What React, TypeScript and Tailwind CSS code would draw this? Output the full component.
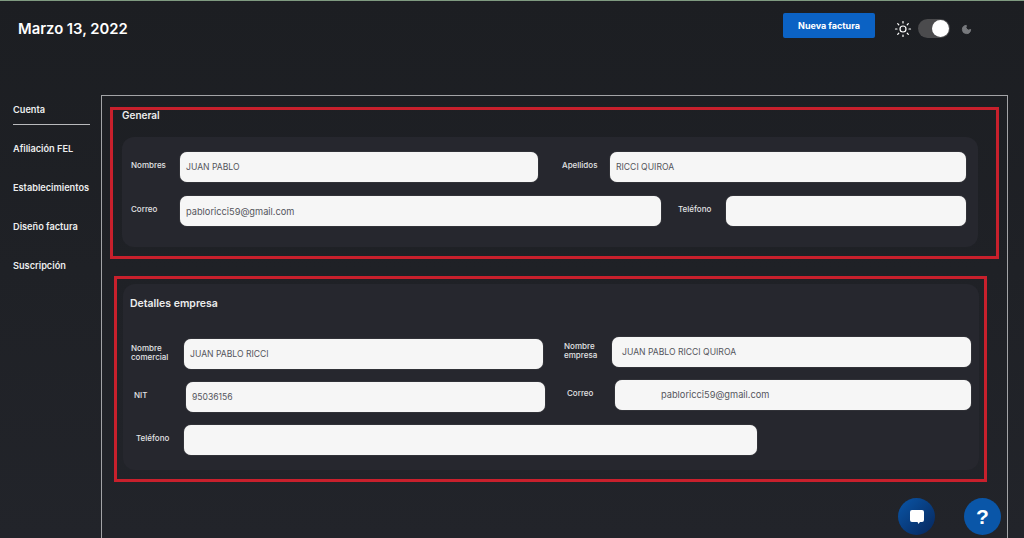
import { Moon, Sun } from 'lucide-react';

const heading = "font-['Inter','Liberation_Sans',sans-serif]";
const body = "font-['Inter','Liberation_Sans',sans-serif]";

const navItems = ['Cuenta', 'Afiliación FEL', 'Establecimientos', 'Diseño factura', 'Suscripción'];

type FieldProps = {
  label: string;
  value?: string;
  labelClass: string;
  inputClass: string;
  textClass?: string;
};

const Field = ({ label, value, labelClass, inputClass, textClass = 'pl-[6px] text-[8.6px]' }: FieldProps) => (
  <div className="flex items-center">
    <span className={`${body} shrink-0 text-[8px] font-medium leading-[9px] text-[#e2e3e5] ${labelClass}`}>
      {label}
    </span>
    <div
      className={`${body} flex h-[30px] shrink-0 items-center rounded-[7px] bg-[#f6f6f6] text-[#54555c] shadow-[0_0_1px_#999] ${textClass} ${inputClass}`}
    >
      {value}
    </div>
  </div>
);

const App = () => {
  return (
    <div className="h-[538px] w-[1024px] overflow-hidden border-t border-[#7f9a80] bg-gradient-to-b from-[#1c1e22] to-[#22242a]">
      <header className="flex h-[94px] items-start">
        <h1 className={`${heading} ml-[18px] mt-[17px] w-[765px] text-[14.8px] font-semibold leading-[22px] text-white`}>
          Marzo 13, 2022
        </h1>
        <button className={`${heading} mt-[12px] h-[25px] w-[92px] rounded-[2px] bg-[#0b62c4] text-[9px] font-bold text-white`}>
          Nueva factura
        </button>
        <Sun className="ml-[19px] mt-[19px] h-[18px] w-[18px] text-white" strokeWidth={1.6} />
        <div className="ml-[6px] mt-[18px] flex h-[19px] w-[32px] items-center justify-end rounded-full bg-[#4b4b4d] pr-[1px]">
          <div className="h-[17px] w-[17px] rounded-full bg-white" />
        </div>
        <Moon className="ml-[11px] mt-[23px] h-[11px] w-[11px] fill-[#77797d] text-[#77797d]" />
      </header>

      <div className="flex">
        <nav className={`${heading} w-[101px] shrink-0 pl-[13px] pt-[9px]`}>
          {navItems.map((item, i) => (
            <div key={item} className="h-[39px] text-[9.2px] font-semibold leading-[12px] text-[#eceded]">
              <div className={i === 0 ? 'w-[77px] border-b border-[#b9babc] pb-[8px]' : ''}>{item}</div>
            </div>
          ))}
        </nav>

        <main className="h-[460px] w-[907px] shrink-0 border border-b-0 border-[#a3a4a7] pl-[8px] pt-[11px]">
          <section className="h-[152px] w-[889px] border-[3px] border-[#c8202c] pl-[9px]">
            <h2 className={`${heading} text-[10px] font-semibold leading-[10px] text-[#eceded]`}>General</h2>
            <div className="mt-[17px] h-[110px] w-[856px] rounded-[12px] bg-[#26272e] pt-[15px]">
              <div className="flex">
                <Field label="Nombres" value="JUAN PABLO" labelClass="w-[49px] pl-[9px] -mt-[3px] box-content" inputClass="w-[358px]" textClass="pl-[6px] pt-[1px] text-[8.6px]" />
                <Field label="Apellidos" value="RICCI QUIROA" labelClass="w-[48px] ml-[24px] -mt-[3px]" inputClass="w-[356px]" textClass="pl-[6px] pt-[1px] text-[8.6px]" />
              </div>
              <div className="mt-[14px] flex">
                <Field label="Correo" value="pabloricci59@gmail.com" labelClass="w-[49px] pl-[9px] -mt-[3px] box-content" inputClass="w-[481px]" textClass="pl-[6px] pt-[1px] text-[9.25px]" />
                <Field label="Teléfono" labelClass="w-[48px] ml-[17px] -mt-[3px]" inputClass="w-[240px]" />
              </div>
            </div>
          </section>

          <section className="ml-[4px] mt-[17px] h-[206px] w-[873px] border-[3px] border-[#c8202c] pl-[6px] pt-[5px]">
            <div className="h-[186px] w-[856px] rounded-[12px] bg-[#26272e] pl-[8px] pt-[13px]">
              <h2 className={`${heading} -ml-[1px] text-[10.5px] font-semibold leading-[14px] text-[#eceded]`}>Detalles empresa</h2>
              <div className="mt-[26px] flex items-start">
                <div className="mt-[2px]">
                  <Field label="Nombre comercial" value="JUAN PABLO RICCI" labelClass="w-[53px] -mt-[3px]" inputClass="w-[359px]" />
                </div>
                <Field label="Nombre empresa" value="JUAN PABLO RICCI QUIROA" labelClass="w-[48px] ml-[21px] -mt-[2px]" inputClass="w-[359px]" textClass="pl-[10px] text-[8.6px]" />
              </div>
              <div className="mt-[11px] flex items-start">
                <div className="mt-[2px]">
                  <Field label="NIT" value="95036156" labelClass="w-[52px] pl-[3px] -mt-[3px] box-content" inputClass="w-[359px]" />
                </div>
                <Field label="Correo" value="pabloricci59@gmail.com" labelClass="w-[48px] ml-[22px] -mt-[3px]" inputClass="w-[356px]" textClass="pl-[46px] text-[9.25px]" />
              </div>
              <div className="mt-[13px] flex">
                <Field label="Teléfono" labelClass="w-[48px] pl-[5px] -mt-[3px] box-content" inputClass="w-[573px]" />
              </div>
            </div>
          </section>
        </main>
      </div>

      {/* floating help buttons */}
      <button className="fixed left-[898px] top-[498px] flex h-[37px] w-[37px] items-center justify-center rounded-full bg-gradient-to-br from-[#0a56a8] to-[#06275c]">
        <svg viewBox="0 0 16 16" className="h-[16px] w-[16px]">
          <path d="M3 1h10a2 2 0 0 1 2 2v8a2 2 0 0 1-2 2h-2l-1.5 2L8.5 13H3a2 2 0 0 1-2-2V3a2 2 0 0 1 2-2z" fill="#fff" />
        </svg>
      </button>
      <button className="fixed left-[964px] top-[498px] flex h-[37px] w-[37px] items-center justify-center rounded-full bg-[#0a56a8] font-['Liberation_Sans',sans-serif] text-[21px] font-bold text-white">
        ?
      </button>
    </div>
  );
};

export default App;
